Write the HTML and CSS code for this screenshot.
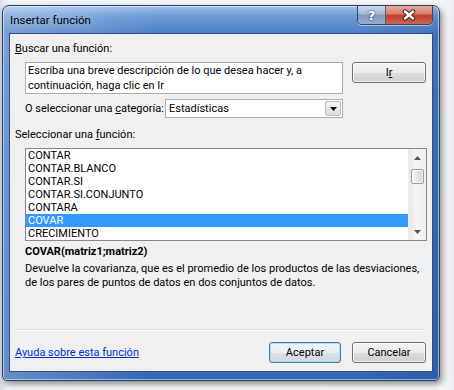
FILE: index.html
```html
<!DOCTYPE html>
<html lang="es">
<head>
  <meta charset="UTF-8">
  <meta name="viewport" content="width=device-width, initial-scale=1.0">
  <title>Insertar función</title>
  <link rel="stylesheet" href="styles.css">
</head>
<body>
  <div class="window">
    <div class="titlebar">
      <span class="title">Insertar función</span>
      <div class="caption-btns">
        <span class="cap-help">?</span>
        <span class="cap-close">
          <svg width="16" height="12" viewBox="0 0 16 12">
            <path d="M4 2.5 L12 9.5 M12 2.5 L4 9.5" stroke="#4a2a24" stroke-width="4.4" stroke-linecap="round"/>
            <path d="M4 2.5 L12 9.5 M12 2.5 L4 9.5" stroke="#fff" stroke-width="2.4" stroke-linecap="round"/>
          </svg>
        </span>
      </div>
    </div>

    <div class="client">
      <div class="lbl"><u>B</u>uscar una función:</div>

      <div class="search-row">
        <div class="search-box">Escriba una breve descripción de lo que desea hacer y, a continuación, haga clic en Ir</div>
        <button class="btn btn-ir">I<u>r</u></button>
      </div>

      <div class="cat-row">
        <span class="cat-lbl">O seleccionar una <u>c</u>ategoría:</span>
        <div class="combo">
          <span class="combo-val">Estadísticas</span>
          <span class="combo-btn">
            <svg width="7" height="4" viewBox="0 0 7 4"><path d="M0 0 H7 L3.5 4 Z" fill="#000"/></svg>
          </span>
        </div>
      </div>

      <div class="lbl lbl-fn">Seleccionar una <u>f</u>unción:</div>

      <div class="listbox">
        <ul class="items">
          <li>CONTAR</li>
          <li>CONTAR.BLANCO</li>
          <li>CONTAR.SI</li>
          <li>CONTAR.SI.CONJUNTO</li>
          <li>CONTARA</li>
          <li class="selected">COVAR</li>
          <li>CRECIMIENTO</li>
        </ul>
        <div class="scrollbar">
          <span class="sb-arrow">
            <svg width="7" height="4" viewBox="0 0 7 4"><path d="M0 4 H7 L3.5 0 Z" fill="#555"/></svg>
          </span>
          <div class="sb-track"><div class="sb-thumb"></div></div>
          <span class="sb-arrow">
            <svg width="7" height="4" viewBox="0 0 7 4"><path d="M0 0 H7 L3.5 4 Z" fill="#555"/></svg>
          </span>
        </div>
      </div>

      <div class="sig">COVAR(matriz1;matriz2)</div>
      <p class="desc">Devuelve la covarianza, que es el promedio de los productos de las desviaciones,<br>de los pares de puntos de datos en dos conjuntos de datos.</p>

      <div class="sep"></div>

      <div class="footer">
        <a href="#" class="help-link">Ayuda sobre esta función</a>
        <button class="btn btn-default">Aceptar</button>
        <button class="btn btn-cancel">Cancelar</button>
      </div>
    </div>
  </div>
</body>
</html>
```

FILE: styles.css
```css
body {
  margin: 0;
  font-family: Roboto, "Noto Sans", sans-serif;
  font-size: 11px;
  color: #000;
  background: linear-gradient(to right, #d9dde2, #f4f5f7 2%, #f7f7f7 97%, #e9ebee);
  height: 390px;
  overflow: hidden;
}

.window {
  margin: 5px 0 0 2px;
  width: 438px;
  height: 376px;
  box-sizing: border-box;
  padding: 0 6px 8px 6px;
  border: 1px solid #24426f;
  border-radius: 7px 7px 5px 5px;
  background:
    linear-gradient(to right, rgba(255, 255, 255, 0.25), rgba(255, 255, 255, 0) 35%, rgba(0, 0, 0, 0) 80%, rgba(0, 20, 60, 0.12)),
    linear-gradient(to bottom, #a4c2ea 0px, #6e9bd6 10px, #4d80c8 27px, #3f73c0 140px, #3567b5 100%);
  box-shadow: inset 0 0 0 1px rgba(255, 255, 255, 0.5), 2px 3px 6px rgba(0, 0, 0, 0.45);
}

.titlebar {
  height: 27px;
  display: flex;
  align-items: flex-start;
}

.title {
  padding: 7px 0 0 1px;
  line-height: 14px;
  font-size: 11.5px;
  text-shadow: 0 0 8px rgba(255, 255, 255, 0.6);
}

.caption-btns {
  margin-left: auto;
  display: flex;
  height: 18px;
  border: 1px solid #34486a;
  border-top: none;
  border-radius: 0 0 5px 5px;
  overflow: hidden;
  box-shadow: 0 1px 0 rgba(255, 255, 255, 0.5);
}

.cap-help {
  width: 27px;
  display: flex;
  align-items: center;
  justify-content: center;
  border-right: 1px solid #4d5c78;
  background: linear-gradient(to bottom, #cbd8ea 0%, #a2b7d6 45%, #7f99c0 50%, #95aed2 100%);
  color: #fff;
  font: bold 13px "DejaVu Sans", sans-serif;
  text-shadow: 0 0 2px #2d3e5a, 0 0 1px #2d3e5a;
}

.cap-close {
  width: 46px;
  display: flex;
  align-items: center;
  justify-content: center;
  background: linear-gradient(to bottom, #e8ab9c 0%, #d77c68 45%, #c13e28 50%, #cd6650 100%);
}

.client {
  height: 339px;
  box-sizing: border-box;
  border: 1px solid #2d4f85;
  background: #f0f0f0;
  padding: 8px 6px 0 5px;
  display: flex;
  flex-direction: column;
}

.lbl {
  line-height: 14px;
}

.lbl-fn {
  margin-top: 10px;
}

.search-row {
  display: flex;
  align-items: flex-start;
  gap: 9px;
  margin: 6px 0 0 10px;
}

.search-box {
  width: 318px;
  height: 32px;
  box-sizing: border-box;
  border: 1px solid #abadb3;
  border-top-color: #a0a4ab;
  background: #fff;
  padding: 0 2px;
  line-height: 15px;
}

.btn {
  height: 21px;
  box-sizing: border-box;
  border: 1px solid #707070;
  border-radius: 3px;
  background: linear-gradient(to bottom, #f2f2f2 0%, #ebebeb 50%, #dddddd 51%, #cfcfcf 100%);
  box-shadow: inset 0 0 0 1px rgba(255, 255, 255, 0.75);
  font: 11px Roboto, "Noto Sans", sans-serif;
  color: #000;
  padding: 0;
}

.btn-ir {
  width: 74px;
}

.cat-row {
  display: flex;
  align-items: center;
  height: 19px;
  margin: 5px 0 0 10px;
}

.cat-lbl {
  width: 140px;
}

.combo {
  width: 178px;
  height: 19px;
  box-sizing: border-box;
  border: 1px solid #abadb3;
  background: #fff;
  display: flex;
  align-items: center;
}

.combo-val {
  flex: 1;
  padding-left: 3px;
}

.combo-btn {
  width: 16px;
  height: 15px;
  margin-right: 1px;
  box-sizing: border-box;
  border: 1px solid #b8bcc4;
  border-radius: 2px;
  background: linear-gradient(to bottom, #f6f6f6, #dcdcdc);
  display: flex;
  align-items: center;
  justify-content: center;
}

.listbox {
  margin: 6px 0 0 10px;
  width: 402px;
  height: 93px;
  box-sizing: border-box;
  border: 1px solid #828790;
  background: #fff;
  display: flex;
}

.items {
  flex: 1;
  list-style: none;
  margin: 0;
  padding: 0;
}

.items li {
  height: 13px;
  line-height: 13px;
  padding-left: 2px;
}

.items li.selected {
  background: #3399ff;
  color: #fff;
}

.scrollbar {
  width: 17px;
  display: flex;
  flex-direction: column;
  background: linear-gradient(to right, #e6e6e6, #f4f4f4 40%, #f0f0f0);
  border-left: 1px solid #ececec;
}

.sb-arrow {
  height: 17px;
  display: flex;
  align-items: center;
  justify-content: center;
}

.sb-track {
  flex: 1;
  padding: 3px 2px 0;
}

.sb-thumb {
  height: 15px;
  box-sizing: border-box;
  border: 1px solid #9b9b9b;
  border-radius: 2px;
  background: linear-gradient(to right, #f4f4f4, #e6e6e6 50%, #d4d4d4);
  box-shadow: inset 0 0 0 1px rgba(255, 255, 255, 0.7);
}

.sig {
  margin: 4px 0 0 10px;
  line-height: 14px;
  font-weight: bold;
}

.desc {
  margin: 3px 0 0 10px;
  line-height: 14px;
}

.sep {
  margin-top: 39px;
  height: 1px;
  background: #d8d8d8;
  border-bottom: 1px solid #fff;
}

.footer {
  margin-top: 11px;
  display: flex;
  align-items: center;
}

.help-link {
  color: #0033cc;
  text-decoration: underline;
  margin-right: auto;
}

.btn-default {
  width: 72px;
  border-color: #3c7fb1;
  box-shadow: inset 0 0 0 1px #a8d8f2;
  background: linear-gradient(to bottom, #f2f5f8 0%, #eaeef2 50%, #dce2e8 51%, #d0d8e0 100%);
}

.btn-cancel {
  width: 74px;
  margin-left: 11px;
}
```
